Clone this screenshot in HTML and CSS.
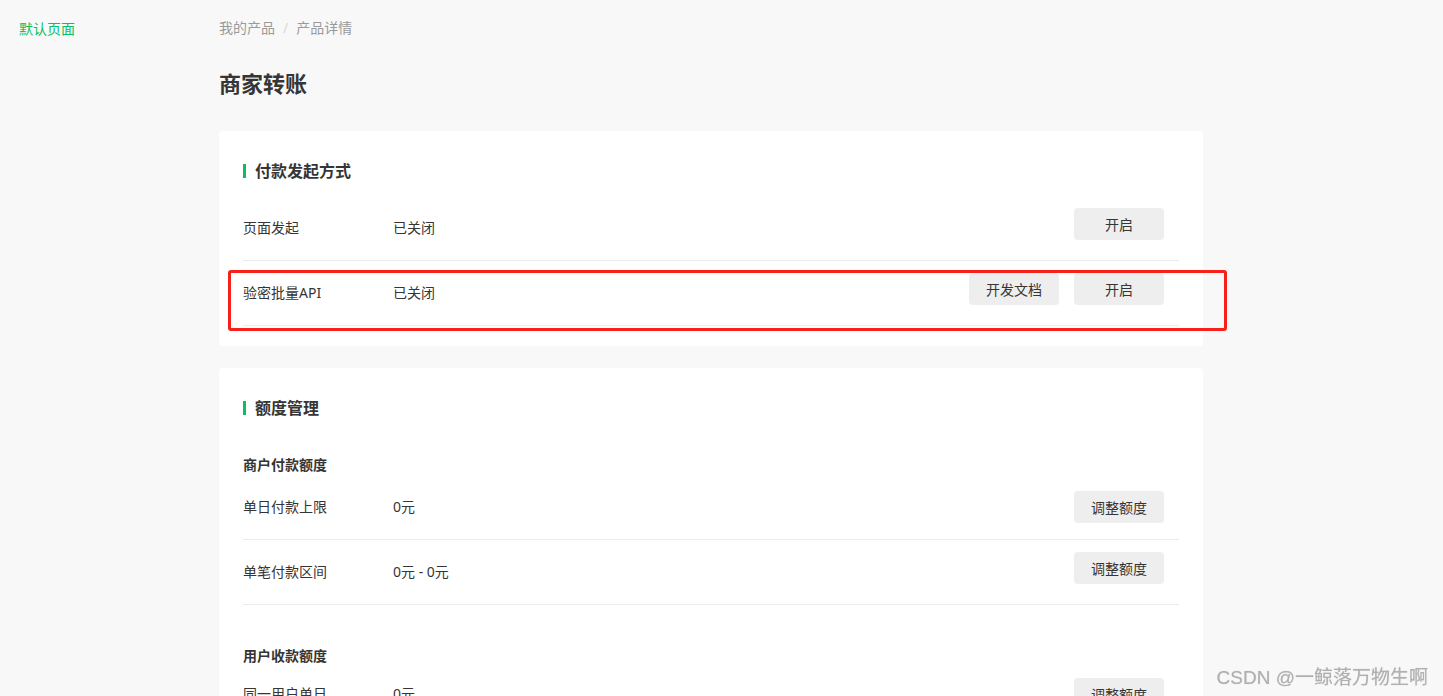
FILE: index.html
```html
<!DOCTYPE html>
<html lang="zh-CN">
<head>
  <meta charset="UTF-8" />
  <title>商家转账</title>
  <link rel="stylesheet" href="styles.css">
</head>
<body>
  <!-- 左侧菜单 -->
  <div class="sidebar">
    <a class="menu-item active" href="#">默认页面</a>
  </div>

  <div class="main">
    <div class="breadcrumb">
      <span>我的产品</span>
      <span class="sep">/</span>
      <span>产品详情</span>
    </div>

    <h1 class="page-title">商家转账</h1>

    <!-- 付款发起方式 -->
    <div class="card">
      <h2 class="card-title">付款发起方式</h2>
      <div class="row">
        <span class="row-label">页面发起</span>
        <span class="row-value">已关闭</span>
        <div class="row-actions">
          <button type="button" class="btn">开启</button>
        </div>
      </div>
      <div class="row">
        <span class="row-label">验密批量API</span>
        <span class="row-value">已关闭</span>
        <div class="row-actions">
          <button type="button" class="btn">开发文档</button>
          <button type="button" class="btn">开启</button>
        </div>
      </div>
      <!-- 标注框 -->
      <div class="mark-box"></div>
    </div>

    <!-- 额度管理 -->
    <div class="card">
      <h2 class="card-title">额度管理</h2>
      <div class="group">
        <h3 class="sub-title">商户付款额度</h3>
        <div class="row row-first">
          <span class="row-label">单日付款上限</span>
          <span class="row-value">0元</span>
          <div class="row-actions">
            <button type="button" class="btn">调整额度</button>
          </div>
        </div>
        <div class="row">
          <span class="row-label">单笔付款区间</span>
          <span class="row-value">0元 - 0元</span>
          <div class="row-actions">
            <button type="button" class="btn">调整额度</button>
          </div>
        </div>
      </div>
      <div class="group">
        <h3 class="sub-title">用户收款额度</h3>
        <div class="row row-first">
          <span class="row-label">同一用户单日</span>
          <span class="row-value">0元</span>
          <div class="row-actions">
            <button type="button" class="btn">调整额度</button>
          </div>
        </div>
        <div class="row">
          <span class="row-label">同一用户单笔</span>
          <span class="row-value">0元</span>
          <div class="row-actions">
            <button type="button" class="btn">调整额度</button>
          </div>
        </div>
      </div>
    </div>
  </div>

  <div class="watermark">CSDN @一鲸落万物生啊</div>
</body>
</html>
```

FILE: styles.css
```css
html, body {
  height: 100%;
}
body {
  margin: 0;
  display: flex;
  align-items: flex-start;
  background: #f8f8f8;
  color: #353535;
  font-family: "Noto Sans", "Noto Sans CJK SC", sans-serif;
  font-size: 14px;
}

/* 左侧菜单 */
.sidebar {
  width: 200px;
  flex-shrink: 0;
  padding: 19px 0 0 19px;
}
.menu-item {
  display: block;
  line-height: 20px;
  color: #999;
  text-decoration: none;
}
.menu-item.active {
  color: #07c160;
}

/* 主体 */
.main {
  width: 984px;
  padding-top: 18px;
}
.breadcrumb {
  display: flex;
  gap: 8px;
  line-height: 20px;
  color: #9a9a9a;
}
.breadcrumb .sep {
  color: #d8d8d8;
}
.page-title {
  margin: 30px 0 33px;
  font-size: 22px;
  line-height: 30px;
  font-weight: bold;
  color: #353535;
}

/* 卡片 */
.card {
  position: relative;
  background: #fff;
  border-radius: 4px;
  padding: 28px 24px 20px;
  margin-bottom: 22px;
}
.card-title {
  display: flex;
  align-items: center;
  gap: 9px;
  margin: 0 0 13px;
  font-size: 16px;
  line-height: 24px;
  font-weight: bold;
}
.card-title::before {
  content: "";
  width: 3px;
  height: 14px;
  background: #07c160;
}
.group {
  display: flow-root;
}
.sub-title {
  margin: 22px 0 4px;
  font-size: 14px;
  line-height: 20px;
  font-weight: bold;
}
.group + .group {
  margin-top: 19px;
}
.group + .group .sub-title {
  margin-bottom: 0;
}

/* 行 */
.row {
  display: flex;
  align-items: flex-start;
  padding: 12px 0 20px;
  border-bottom: 1px solid #ececec;
}
.card > .row:last-of-type {
  border-bottom: none;
}
.row-label {
  width: 150px;
  flex-shrink: 0;
  padding-top: 10px;
  line-height: 20px;
}
.row-value {
  flex: 1;
  padding-top: 10px;
  line-height: 20px;
}
.row-first {
  padding-bottom: 16px;
}
.row-first .row-label,
.row-first .row-value {
  padding-top: 6px;
}
.row-actions {
  display: flex;
  gap: 15px;
  padding-right: 15px;
}
.btn {
  width: 90px;
  height: 32px;
  border: none;
  border-radius: 4px;
  background: #eeeeee;
  color: #353535;
  font-family: inherit;
  font-size: 14px;
  cursor: pointer;
}

/* 红色标注框 */
.mark-box {
  position: absolute;
  left: 9px;
  top: 139px;
  width: 999px;
  height: 61px;
  box-sizing: border-box;
  border: 3px solid #f5211a;
  border-radius: 3px;
  pointer-events: none;
}

/* 水印 */
.watermark {
  position: fixed;
  right: 15px;
  bottom: 6px;
  font-family: "Liberation Sans", "Noto Sans CJK SC", sans-serif;
  font-size: 19px;
  line-height: 24px;
  color: #b0b0b0;
  text-shadow: 0 0 1px rgba(0, 0, 0, 0.2);
}
```
